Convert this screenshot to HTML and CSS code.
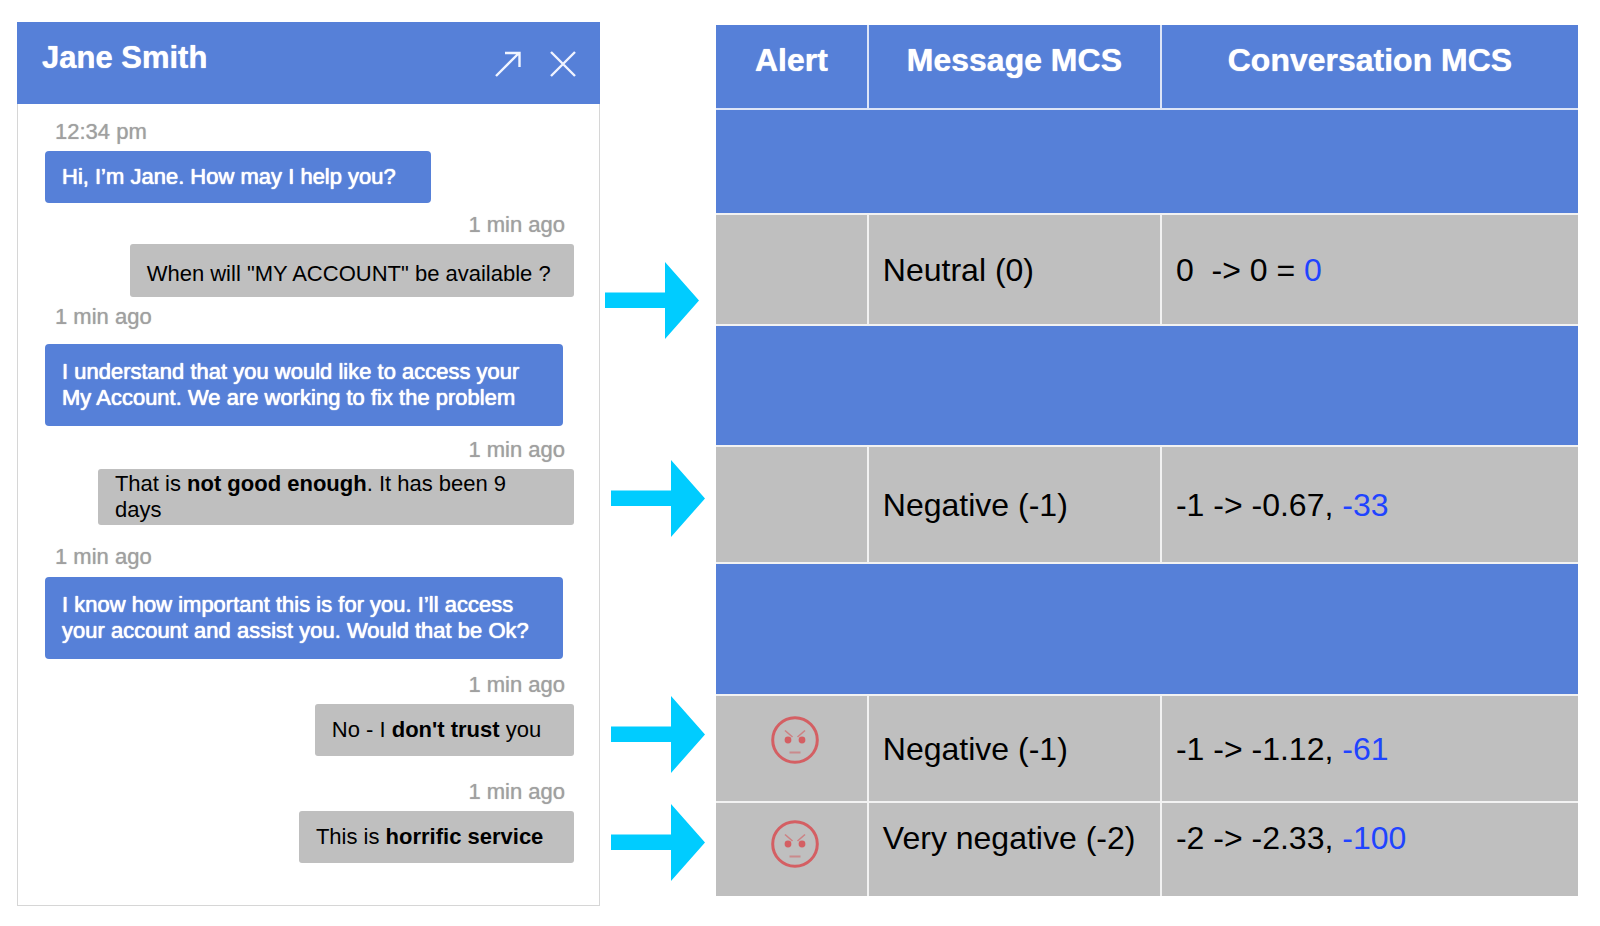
FILE: index.html
```html
<!DOCTYPE html>
<html lang="en">
<head>
<meta charset="utf-8">
<title>Conversation sentiment</title>
<link rel="stylesheet" href="styles.css">
</head>
<body>
<svg class="defs" aria-hidden="true">
  <symbol id="arrow" viewBox="0 0 94 77"><path d="M0 30.500H60V0L94 38.500L60 77V46H0Z" fill="#00ccff"/></symbol>
  <symbol id="angry" viewBox="0 0 48 48">
    <g fill="none" stroke="#d45f63">
      <circle cx="24" cy="24" r="22.300" stroke-width="3"/>
      <path d="M14 14.500L21.500 21M34 14.500L26.500 21" stroke-width="1.600" opacity=".65"/>
      <path d="M18.500 36.500H29.500" stroke-width="2" opacity=".55"/>
    </g>
    <circle cx="17" cy="24" r="3.400" fill="#d45f63"/>
    <circle cx="31" cy="24" r="3.400" fill="#d45f63"/>
  </symbol>
</svg>
<main class="page">
  <section class="chat">
    <header class="chat-header">
      <h1 class="chat-title">Jane Smith</h1>
      <div class="chat-actions">
        <button class="icon-button" type="button" aria-label="Expand"><svg viewBox="0 0 26 26"><path d="M1 25L24 2M10 2H24.500V16"/></svg></button>
        <button class="icon-button" type="button" aria-label="Close"><svg viewBox="0 0 26 26"><path d="M1 1L25 25M25 1L1 25"/></svg></button>
      </div>
    </header>
    <ol class="messages">
      <li class="message agent"><time class="time">12:34 pm</time><p class="bubble w-greeting">Hi, I’m Jane. How may I help you?</p></li>
      <li class="message customer"><time class="time">1 min ago</time><p class="bubble low w-question">When will "MY ACCOUNT" be available ?</p></li>
      <li class="message agent spaced"><time class="time">1 min ago</time><p class="bubble long">I understand that you would like to access your My Account. We are working to fix the problem</p></li>
      <li class="message customer after-long"><time class="time">1 min ago</time><p class="bubble tight w-complaint">That is <b>not good enough</b>. It has been 9 days</p></li>
      <li class="message agent after-long"><time class="time">1 min ago</time><p class="bubble long">I know how important this is for you. I’ll access your account and assist you. Would that be Ok?</p></li>
      <li class="message customer after-long"><time class="time">1 min ago</time><p class="bubble w-trust">No - I <b>don't trust</b> you</p></li>
      <li class="message customer apart"><time class="time">1 min ago</time><p class="bubble w-service">This is <b>horrific service</b></p></li>
    </ol>
  </section>

  <div class="links" aria-hidden="true">
    <svg class="link first"><use href="#arrow"/></svg>
    <svg class="link second"><use href="#arrow"/></svg>
    <svg class="link third"><use href="#arrow"/></svg>
    <svg class="link fourth"><use href="#arrow"/></svg>
  </div>

  <table class="scores">
    <colgroup><col class="col-alert"><col class="col-message"><col class="col-conversation"></colgroup>
    <thead>
      <tr class="head"><th scope="col">Alert</th><th scope="col">Message MCS</th><th scope="col">Conversation MCS</th></tr>
    </thead>
    <tbody>
      <tr class="band band-s"><td colspan="3"></td></tr>
      <tr class="row-m"><td></td><td>Neutral (0)</td><td class="pre">0  -&gt; 0 = <span class="score">0</span></td></tr>
      <tr class="band band-m"><td colspan="3"></td></tr>
      <tr class="row-l"><td></td><td>Negative (-1)</td><td>-1 -&gt; -0.67, <span class="score">-33</span></td></tr>
      <tr class="band band-l"><td colspan="3"></td></tr>
      <tr class="row-s"><td class="alert"><svg class="face" role="img" aria-label="Angry"><use href="#angry"/></svg></td><td>Negative (-1)</td><td>-1 -&gt; -1.12, <span class="score">-61</span></td></tr>
      <tr class="row-last"><td class="alert"><svg class="face" role="img" aria-label="Angry"><use href="#angry"/></svg></td><td>Very negative (-2)</td><td>-2 -&gt; -2.33, <span class="score">-100</span></td></tr>
    </tbody>
  </table>
</main>
</body>
</html>
```
FILE: styles.css
```css
:root {
  --blue: #5680d8;
  --gray: #bfbfbf;
}

* { box-sizing: border-box; }

body {
  margin: 0;
  background: #fff;
  color: #000;
  font-family: "Liberation Sans", Arial, sans-serif;
}

.defs { position: absolute; width: 0; height: 0; }

.page {
  display: grid;
  grid-template-columns: 583fr 116fr 862fr;
  align-items: start;
  padding: 22px 22px 22px 17px;
}

/* Chat window */
.chat { border: 1px solid #d6d6d6; border-top: 0; }

.chat-header {
  display: flex;
  justify-content: space-between;
  align-items: flex-start;
  margin: 0 -1px;
  padding: 18px 24px 27px 25px;
  background: var(--blue);
  color: #fff;
}

.chat-title {
  margin: 0;
  font-size: 31px;
  line-height: 36px;
  text-shadow: 0 0 1px #fff;
}

.chat-actions { display: flex; gap: 29px; padding-top: 11px; }

.icon-button {
  width: 26px;
  height: 26px;
  padding: 0;
  border: 0;
  background: none;
  cursor: pointer;
}

.icon-button svg {
  display: block;
  width: 100%;
  height: 100%;
  fill: none;
  stroke: #f0f4ff;
  stroke-width: 2.4;
}

.messages {
  display: flex;
  flex-direction: column;
  gap: 9px;
  margin: 0;
  padding: 15px 25px 42px 27px;
  list-style: none;
  font-size: 22px;
  line-height: 26px;
}

.message { display: flex; flex-direction: column; gap: 6px; }
.agent { align-items: flex-start; }
.customer { align-items: flex-end; }
.spaced { gap: 14px; margin-top: -2px; }
.after-long { margin-top: 2px; }
.agent.after-long { gap: 7px; margin-top: 10px; }
.after-long + .after-long + .after-long { margin-top: 4px; }
.apart { margin-top: 14px; }

.time { padding: 0 9px 0 10px; color: #a0a0a0; text-shadow: 0 0 1px #b0b0b0; }

.bubble { margin: 0; padding: 13px 17px; border-radius: 4px; }
.agent .bubble {
  background: var(--blue);
  color: #fff;
  text-shadow: 0 0 1px #fff, 0 0 1px #fff;
}
.customer .bubble { background: var(--gray); border-radius: 3px; }
.bubble.low { padding-top: 17px; padding-bottom: 10px; }
.bubble.long { width: 98%; padding-top: 15px; padding-bottom: 15px; }
.bubble.tight { padding-top: 2px; padding-bottom: 2px; }

.w-greeting { width: 73%; }
.w-question { width: 84%; }
.w-complaint { width: 90%; }
.w-trust { width: 49%; }
.w-service { width: 52%; }

/* Arrows from customer messages to their scores */
.links { display: flex; flex-direction: column; align-items: flex-start; padding-left: 11px; }
.link { display: block; width: 94px; height: 77px; }
.first { margin: 240px 0 0 -6px; }
.second { margin-top: 121px; }
.third { margin-top: 159px; }
.fourth { margin-top: 31px; }

/* Score table */
.scores {
  width: 100%;
  margin-top: 3px;
  border-collapse: separate;
  border-spacing: 0;
  table-layout: fixed;
  font-size: 32px;
  line-height: 36px;
}

.col-alert { width: 17.5%; }
.col-message { width: 34%; }
.col-conversation { width: 48.5%; }

.scores th, .scores td {
  padding: 0 14px;
  border: 0 solid #f2f2f2;
  border-bottom-width: 2px;
  background: var(--gray);
  text-align: left;
  vertical-align: middle;
  white-space: nowrap;
}

.scores th + th, .scores td + td { border-left-width: 2px; }
.scores tr:last-child td { border-bottom-width: 0; }

.scores .head th {
  height: 85px;
  padding-top: 17px;
  border-bottom-width: 2px;
  border-color: #dde5f7;
  background: var(--blue);
  color: #fff;
  text-align: center;
  text-shadow: 0 0 1px #fff;
  vertical-align: top;
}

.scores tbody tr:last-child td { padding-top: 17px; vertical-align: top; }
.scores .band td { background: var(--blue); }
.band-s td { height: 105px; }
.band-m td { height: 121px; }
.band-l td { height: 132px; }
.row-m td { height: 111px; }
.row-l td { height: 117px; }
.row-s td { height: 107px; }
.row-last td { height: 93px; }

.scores .pre { white-space: pre; }
.scores .alert { padding: 20px 0 0 8px; text-align: center; vertical-align: top; }
.face { display: block; width: 48px; height: 48px; margin: 0 auto; }
.score { color: #1f44ff; }
```
